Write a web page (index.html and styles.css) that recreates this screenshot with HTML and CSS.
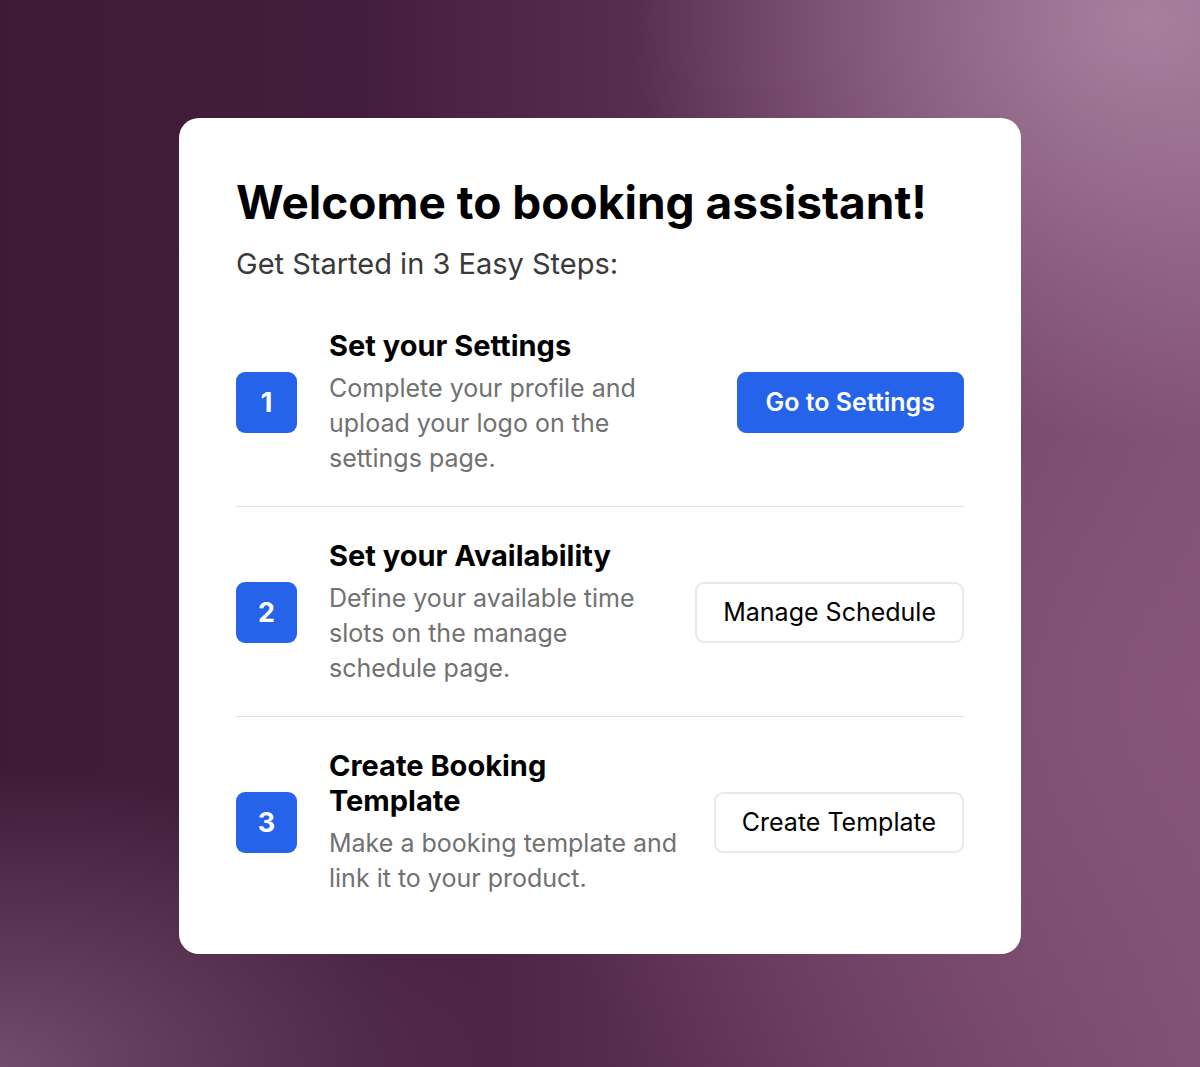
FILE: index.html
```html
<!DOCTYPE html>
<html lang="en">
<head>
<meta charset="utf-8">
<title>Booking assistant</title>
<link rel="stylesheet" href="styles.css">
</head>
<body>
<main class="card">
  <h1 class="title">Welcome to booking assistant!</h1>
  <p class="subtitle">Get Started in 3 Easy Steps:</p>
  <ol class="steps">
    <li class="step">
      <div class="num">1</div>
      <div class="text">
        <h2 class="step-title">Set your Settings</h2>
        <p class="step-desc">Complete your profile and upload your logo on the settings page.</p>
      </div>
      <button class="btn btn-primary">Go to Settings</button>
    </li>
    <li class="step">
      <div class="num">2</div>
      <div class="text">
        <h2 class="step-title">Set your Availability</h2>
        <p class="step-desc">Define your available time slots on the manage schedule page.</p>
      </div>
      <button class="btn btn-outline">Manage Schedule</button>
    </li>
    <li class="step">
      <div class="num">3</div>
      <div class="text">
        <h2 class="step-title">Create Booking Template</h2>
        <p class="step-desc">Make a booking template and link it to your product.</p>
      </div>
      <button class="btn btn-outline">Create Template</button>
    </li>
  </ol>
</main>
</body>
</html>
```

FILE: styles.css
```css
* { box-sizing: border-box; }

html, body { height: 100%; }

body {
  margin: 0;
  padding-top: 5px;
  min-height: 100vh;
  display: flex;
  align-items: center;
  justify-content: center;
  font-family: Inter, "Noto Sans", sans-serif;
  font-optical-sizing: none;
  background-color: #5a2f52;
  background-image:
    radial-gradient(ellipse 520px 420px at 1150px 20px, rgba(170, 130, 160, 0.95), rgba(170, 130, 160, 0) 100%),
    radial-gradient(ellipse 700px 600px at 1200px 700px, rgba(135, 85, 122, 0.9), rgba(135, 85, 122, 0) 100%),
    radial-gradient(ellipse 500px 300px at 0px 1067px, rgba(120, 80, 115, 0.9), rgba(120, 80, 115, 0) 100%),
    linear-gradient(90deg, #3f1a37 0%, #451d3c 30%, #65395d 70%, #7f4f73 100%);
}

.card {
  width: 842px;
  background: #ffffff;
  border-radius: 20px;
  padding: 56px 57px 58px;
}

.title {
  margin: 0;
  font-size: 46px;
  line-height: 56px;
  font-weight: 700;
  color: #000000;
}

.subtitle {
  margin: 14px 0 0;
  font-size: 29px;
  line-height: 40px;
  color: #3a3a3a;
}

.steps {
  list-style: none;
  margin: 13px 0 0;
  padding: 0;
}

.step {
  display: flex;
  align-items: center;
  gap: 32px;
  padding: 31px 0 30px;
  border-bottom: 1px solid #e3e3e3;
}

.step:last-child {
  border-bottom: none;
  padding-bottom: 0;
}

.num {
  flex: none;
  width: 61px;
  height: 61px;
  border-radius: 9px;
  background: #2563eb;
  color: #ffffff;
  font-size: 27px;
  font-weight: 700;
  display: flex;
  align-items: center;
  justify-content: center;
}

.text {
  flex: 1;
  min-width: 0;
}

.step-title {
  margin: 0 0 8px;
  font-size: 29px;
  line-height: 35px;
  font-weight: 700;
  color: #000000;
}

.step-desc {
  margin: 0;
  font-size: 25px;
  line-height: 35px;
  color: #717171;
}

.btn {
  flex: none;
  height: 61px;
  padding: 0 28px;
  border-radius: 9px;
  font-family: Inter, "Noto Sans", sans-serif;
  font-optical-sizing: none;
  font-size: 25px;
}

.btn-primary {
  background: #2563eb;
  border: 1px solid #2563eb;
  color: #ffffff;
  font-weight: 600;
}

.btn-outline {
  padding: 0 26px;
  background: #ffffff;
  border: 2px solid #e8e8e8;
  color: #000000;
  font-weight: 400;
}
```
